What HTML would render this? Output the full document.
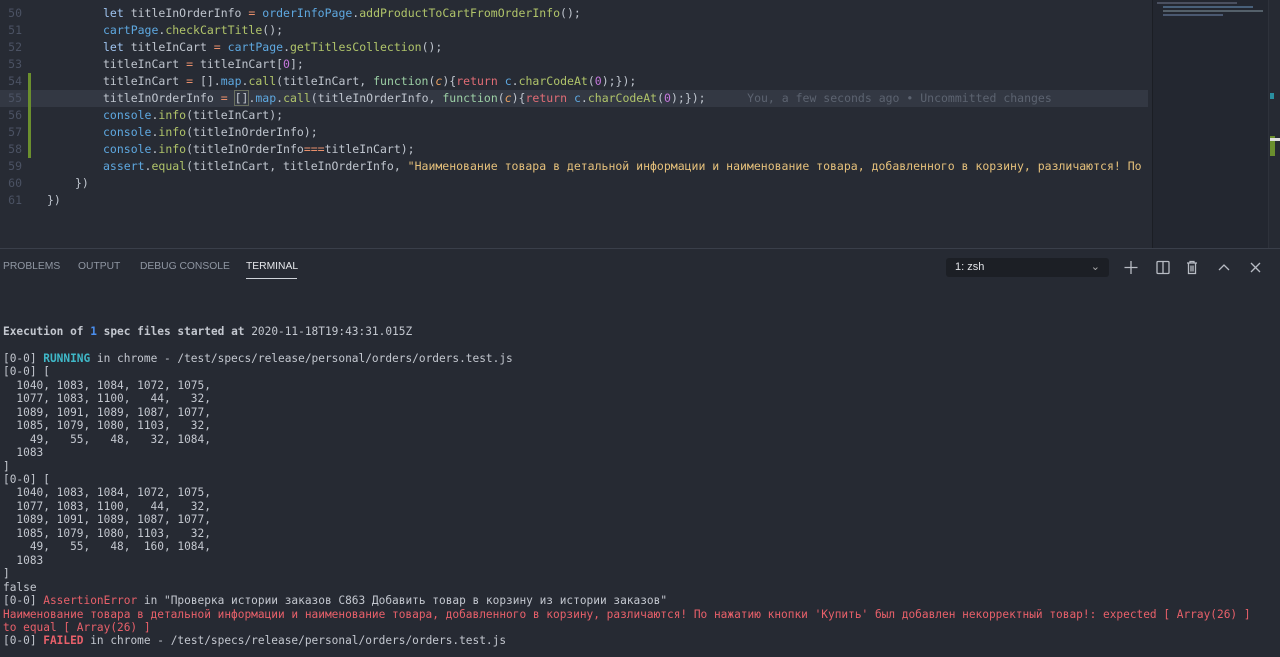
<!DOCTYPE html>
<html><head><meta charset="utf-8"><style>
html,body{margin:0;padding:0;width:1280px;height:657px;overflow:hidden;background:#262a33;}
body{position:relative;font-family:"DejaVu Sans Mono","Liberation Mono",monospace;}
.ed{position:absolute;left:0;top:0;width:1152px;height:248px;background:#272b34;}
.l{position:absolute;left:0;height:17px;line-height:17px;font-size:11.5px;color:#bfc5ce;white-space:pre;width:1150px;}
.n{position:absolute;left:0;width:22px;text-align:right;color:#4b5263;}
.c{position:absolute;left:40px;}
.cur{background:#333843;}
.gb{position:absolute;left:28px;width:3px;background:#6b8f2e;}
.k{color:#9ec3ef}.o{color:#5ea8e0}.m{color:#b0c46a}.f{color:#9ccfa5}.r{color:#e06c75}.p{color:#e8a060;font-style:italic}.s{color:#e5c07b}.nu{color:#c678dd}.eq{color:#e88f6b}
.mini{position:absolute;left:1152px;top:0;width:116px;height:248px;background:#232730;border-left:1px solid #1b1e24;}
.sb{position:absolute;left:1268px;top:0;width:12px;height:248px;background:#262a33;border-left:1px solid #2e323b;}
.panel{position:absolute;left:0;top:248px;width:1280px;height:409px;background:#262a33;border-top:1px solid #3a3f4a;}
.tab{position:absolute;top:12px;font-family:"Liberation Sans",sans-serif;font-size:10.3px;color:#9097a3;}
.t{position:absolute;left:3px;top:76px;font-size:11.15px;line-height:13.45px;color:#c3c7cf;white-space:pre;}
.b{font-weight:bold}.cy{color:#3fb8c8}.bl{color:#4a8ff0}.rd{color:#e8606a}
</style></head><body>
<div class="ed">
<div class="l" style="top:5px"><span class="n">50</span><span class="c" style="left:103px"><span class="k">let</span> titleInOrderInfo <span class="eq">=</span> <span class="o">orderInfoPage</span>.<span class="m">addProductToCartFromOrderInfo</span>();</span></div>
<div class="l" style="top:22px"><span class="n">51</span><span class="c" style="left:103px"><span class="o">cartPage</span>.<span class="m">checkCartTitle</span>();</span></div>
<div class="l" style="top:39px"><span class="n">52</span><span class="c" style="left:103px"><span class="k">let</span> titleInCart <span class="eq">=</span> <span class="o">cartPage</span>.<span class="m">getTitlesCollection</span>();</span></div>
<div class="l" style="top:56px"><span class="n">53</span><span class="c" style="left:103px">titleInCart <span class="eq">=</span> titleInCart[<span class="nu">0</span>];</span></div>
<div class="l" style="top:73px"><span class="n">54</span><span class="c" style="left:103px">titleInCart <span class="eq">=</span> [].<span class="o">map</span>.<span class="m">call</span>(titleInCart, <span class="f">function</span>(<span class="p">c</span>){<span class="r">return</span> <span class="o">c</span>.<span class="m">charCodeAt</span>(<span class="nu">0</span>);});</span></div>
<div class="l cur" style="top:90px"><span class="n">55</span><span class="c" style="left:103px">titleInOrderInfo <span class="eq">=</span> <span style="outline:1px solid #6a7060">[]</span>.<span class="o">map</span>.<span class="m">call</span>(titleInOrderInfo, <span class="f">function</span>(<span class="p">c</span>){<span class="r">return</span> <span class="o">c</span>.<span class="m">charCodeAt</span>(<span class="nu">0</span>);});      <span style="color:#5c6370">You, a few seconds ago • Uncommitted changes</span></span></div>
<div class="l" style="top:107px"><span class="n">56</span><span class="c" style="left:103px"><span class="o">console</span>.<span class="m">info</span>(titleInCart);</span></div>
<div class="l" style="top:124px"><span class="n">57</span><span class="c" style="left:103px"><span class="o">console</span>.<span class="m">info</span>(titleInOrderInfo);</span></div>
<div class="l" style="top:141px"><span class="n">58</span><span class="c" style="left:103px"><span class="o">console</span>.<span class="m">info</span>(titleInOrderInfo<span class="eq">===</span>titleInCart);</span></div>
<div class="l" style="top:158px"><span class="n">59</span><span class="c" style="left:103px"><span class="o">assert</span>.<span class="m">equal</span>(titleInCart, titleInOrderInfo, <span class="s">"Наименование товара в детальной информации и наименование товара, добавленного в корзину, различаются! По нажатию</span></span></div>
<div class="l" style="top:175px"><span class="n">60</span><span class="c" style="left:75px">})</span></div>
<div class="l" style="top:192px"><span class="n">61</span><span class="c" style="left:47px">})</span></div>
<div class="gb" style="top:73px;height:85px"></div>
<div style="position:absolute;left:1148px;top:0;width:4px;height:248px;background:#272b34"></div>
</div>
<div class="mini">
<div style="position:absolute;left:4px;top:2px;width:80px;height:2px;background:#4a5060"></div>
<div style="position:absolute;left:10px;top:6px;width:90px;height:2px;background:#48607a"></div>
<div style="position:absolute;left:10px;top:10px;width:100px;height:2px;background:#54606a"></div>
<div style="position:absolute;left:10px;top:14px;width:60px;height:2px;background:#4a5870"></div>
</div>
<div class="sb"><div style="position:absolute;left:1px;top:93px;width:4px;height:6px;background:#2a8fa0"></div><div style="position:absolute;left:1px;top:136px;width:5px;height:20px;background:#6b8f2e"></div><div style="position:absolute;left:1px;top:138px;width:10px;height:3px;background:#ddd"></div></div>
<div class="panel">
<span class="tab" style="left:3px">PROBLEMS</span>
<span class="tab" style="left:78px">OUTPUT</span>
<span class="tab" style="left:140px">DEBUG CONSOLE</span>
<span class="tab" style="left:246px;color:#e6e8ec">TERMINAL</span>
<div style="position:absolute;left:246px;top:29px;width:51px;height:1px;background:#d0d4da"></div>
<div style="position:absolute;left:946px;top:9px;width:163px;height:19px;background:#1c1f25;border-radius:3px;font-family:'Liberation Sans',sans-serif;font-size:11px;color:#e0e2e6;line-height:19px;text-indent:9px">1: zsh<span style="position:absolute;right:9px;top:0;color:#aaa">⌄</span></div>
<svg style="position:absolute;left:1120px;top:8px" width="150" height="20" fill="none" stroke="#b8bcc4" stroke-width="1.3">
<path d="M11 4v13M4.5 10.5h13"/>
<rect x="37" y="4.5" width="12" height="12" rx="1"/><path d="M43 4.5v12"/>
<path d="M67 6h10M70 6V4.5h4V6M68.5 6.5v10h7v-10M71 8.5v6M73 8.5v6"/>
<path d="M99 13l5-5 5 5"/>
<path d="M131 6l9 9M140 6l-9 9"/>
</svg>
<div class="t"><span class="b">Execution of <span class="bl">1</span> spec files started at</span> 2020-11-18T19:43:31.015Z

[0-0] <span class="b cy">RUNNING</span> in chrome - /test/specs/release/personal/orders/orders.test.js
[0-0] [
  1040, 1083, 1084, 1072, 1075,
  1077, 1083, 1100,   44,   32,
  1089, 1091, 1089, 1087, 1077,
  1085, 1079, 1080, 1103,   32,
    49,   55,   48,   32, 1084,
  1083
]
[0-0] [
  1040, 1083, 1084, 1072, 1075,
  1077, 1083, 1100,   44,   32,
  1089, 1091, 1089, 1087, 1077,
  1085, 1079, 1080, 1103,   32,
    49,   55,   48,  160, 1084,
  1083
]
false
[0-0] <span class="rd">AssertionError</span> in "Проверка истории заказов C863 Добавить товар в корзину из истории заказов"
<span class="rd">Наименование товара в детальной информации и наименование товара, добавленного в корзину, различаются! По нажатию кнопки 'Купить' был добавлен некорректный товар!: expected [ Array(26) ]
to equal [ Array(26) ]</span>
[0-0] <span class="b rd">FAILED</span> in chrome - /test/specs/release/personal/orders/orders.test.js</div>
</div>
</body></html>
